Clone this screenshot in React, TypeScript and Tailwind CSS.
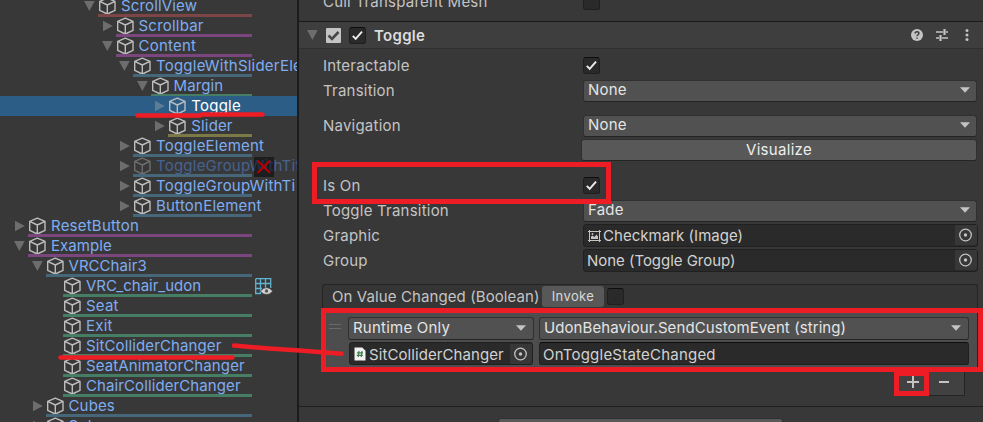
import type { ReactNode } from "react";

type Item = {
  name: string;
  icon: string;
  line: string;
  tracking?: string;
  arrow?: "open" | "closed";
  selected?: boolean;
  dim?: boolean;
  badge?: "cross" | "grid";
};

const items: Item[] = [
  { name: "ScrollView", icon: "pl-[98px]", line: "left-[98px] bg-[#7d4646]", tracking: "tracking-[0.15px]", arrow: "open" },
  { name: "Scrollbar", icon: "pl-[115.5px]", line: "left-[116px] bg-[#7b467d]", arrow: "closed" },
  { name: "Content", icon: "pl-[115.5px]", line: "left-[116px] bg-[#7b467d]", arrow: "open" },
  { name: "ToggleWithSliderEle", icon: "pl-[133px]", line: "left-[133px] bg-[#466779]", arrow: "open" },
  { name: "Margin", icon: "pl-[150.5px]", line: "left-[151px] bg-[#467d65]", tracking: "tracking-[0.1px]", arrow: "open" },
  { name: "Toggle", icon: "pl-[168.3px]", line: "hidden", arrow: "closed", selected: true },
  { name: "Slider", icon: "pl-[168.3px]", line: "left-[168px] bg-[#7b7946]", tracking: "tracking-[0.15px]", arrow: "closed" },
  { name: "ToggleElement", icon: "pl-[133px]", line: "left-[133px] bg-[#466779]", arrow: "closed" },
  { name: "ToggleGroupWithTit", icon: "pl-[133px]", line: "left-[133px] bg-[#466779]", arrow: "closed", dim: true, badge: "cross" },
  { name: "ToggleGroupWithTi", icon: "pl-[133px]", line: "left-[133px] bg-[#466779]", arrow: "closed" },
  { name: "ButtonElement", icon: "pl-[133px]", line: "left-[133px] bg-[#466779]", arrow: "closed" },
  { name: "ResetButton", icon: "pl-[28px]", line: "left-[28px] bg-[#7b467d]", arrow: "closed" },
  { name: "Example", icon: "pl-[28px]", line: "left-[28px] bg-[#7b467d]", tracking: "tracking-[0.05px]", arrow: "open" },
  { name: "VRCChair3", icon: "pl-[45.5px]", line: "left-[46px] bg-[#466779]", tracking: "tracking-[0.05px]", arrow: "open" },
  { name: "VRC_chair_udon", icon: "pl-[63px]", line: "left-[63px] bg-[#467d65]", tracking: "tracking-[0px]", badge: "grid" },
  { name: "Seat", icon: "pl-[63px]", line: "left-[63px] bg-[#467d65]" },
  { name: "Exit", icon: "pl-[63px]", line: "left-[63px] bg-[#467d65]" },
  { name: "SitColliderChanger", icon: "pl-[63px]", line: "left-[63px] bg-[#467d65]", tracking: "tracking-[0.12px]" },
  { name: "SeatAnimatorChanger", icon: "pl-[63px]", line: "left-[63px] bg-[#467d65]", tracking: "tracking-[0.13px]" },
  { name: "ChairColliderChanger", icon: "pl-[63px]", line: "left-[63px] bg-[#467d65]", tracking: "tracking-[0.1px]" },
  { name: "Cubes", icon: "pl-[45.5px]", line: "left-[46px] bg-[#466779]", tracking: "tracking-[0.15px]", arrow: "closed" },
  { name: "Spheres", icon: "pl-[45.5px]", line: "left-[46px] bg-[#466779]", arrow: "closed" },
];

function Cube({ color }: { color: string }) {
  return (
    <svg className="h-[18px] w-[18px] shrink-0" viewBox="0 0 18 18" fill="none" stroke={color} strokeWidth="1.4" strokeLinejoin="round">
      <path d="M9.3 1.1 17 4.4V13.4L9.3 17 1.7 13.4V4.4ZM1.7 4.4 9.3 8 17 4.4M9.3 8V17" />
    </svg>
  );
}

function Arrow({ kind, color = "#6d6d6d" }: { kind: "open" | "closed"; color?: string }) {
  return (
    <svg className="h-[12px] w-[12px] shrink-0" viewBox="0 0 12 12" fill={color}>
      <path d={kind === "open" ? "M0 1H10.7L5.4 11Z" : "M1 .8V11.2L10.8 6Z"} />
    </svg>
  );
}

function HierarchyRow({ item }: { item: Item }) {
  const color = item.selected ? "text-white" : item.dim ? "text-[#48628f]" : "text-[#7fadf1]";
  return (
    <div className={`relative flex h-5 shrink-0 items-center ${item.icon} ${item.selected ? "bg-[#2c5d87]" : ""}`}>
      <div className={`absolute top-[18px] h-[3px] right-[45px] ${item.line}`} />
      <div className="relative -ml-[14px] flex w-[14px] shrink-0">
        {item.arrow && <Arrow kind={item.arrow} color={item.selected ? "#5d7c96" : undefined} />}
      </div>
      <Cube color={item.dim ? "#6e6e6e" : "#bdbdbd"} />
      <span className={`relative ml-[5px] whitespace-nowrap text-[15px] leading-5 ${item.tracking ?? "tracking-[0.22px]"} ${color}`}>{item.name}</span>
      {item.badge === "cross" && (
        <svg className="absolute left-[254px] top-px h-5 w-5" viewBox="0 0 20 20">
          <rect width="20" height="20" fill="#000" fillOpacity=".48" />
          <path d="M3.5 3.5 16 16M16 3.5 3.5 16" stroke="#b30009" strokeWidth="2" />
        </svg>
      )}
      {item.badge === "grid" && (
        <svg className="absolute left-[255px] top-[2px] h-[18px] w-[18px]" viewBox="0 0 18 18" fill="none">
          <path d="M.7 .7H15.7V10M.7 .7V15.5H6M5.5 .7V15.5M10.5 .7V10M.7 5.5H15.7M.7 10.5H7" stroke="#5fb3cf" strokeWidth="1.3" />
          <path d="M5.2 13.2Q11.5 6 17.8 13.2 11.5 20 5.2 13.2Z" fill="#d0d0d0" stroke="#383838" strokeWidth=".6" />
          <circle cx="11.5" cy="13" r="1.7" fill="#555" />
        </svg>
      )}
    </div>
  );
}

function Checkbox({ checked }: { checked?: boolean }) {
  return (
    <span className="flex h-[17px] w-[17px] shrink-0 items-center justify-center rounded-[3px] border border-[#1f1f1f] border-t-[#0d0d0d] bg-[#2a2a2a]">
      {checked && (
        <svg className="h-[13px] w-[13px]" viewBox="0 0 13 13" fill="none" stroke="#ededed" strokeWidth="1.9">
          <path d="M1.8 6.8 4.7 9.9 11 2.6" />
        </svg>
      )}
    </span>
  );
}

function Caret() {
  return (
    <svg className="h-[6px] w-[10px] shrink-0" viewBox="0 0 10 6" fill="#c4c4c4">
      <path d="M0 .2H10L5 5.8Z" />
    </svg>
  );
}

function Dropdown({ className, children }: { className: string; children: ReactNode }) {
  return (
    <div className={`flex items-center justify-between rounded-[3px] border border-[#303030] border-b-[#242424] bg-[#515151] pb-[2px] pl-[4px] text-[#e4e4e4] ${className}`}>
      <span className="whitespace-nowrap">{children}</span>
      <Caret />
    </div>
  );
}

function ObjectField({ className, icon, children }: { className: string; icon?: ReactNode; children: ReactNode }) {
  return (
    <div className={`flex h-[23px] items-center rounded-[3px] border border-[#202020] bg-[#2a2a2a] text-[#d2d2d2] ${className}`}>
      {icon}
      <span className="whitespace-nowrap pt-px">{children}</span>
      <span className="ml-auto flex h-5 w-[22px] shrink-0 items-center justify-center self-start rounded-br-[3px] bg-[#373737]">
        <svg className="h-[14px] w-[14px]" viewBox="0 0 14 14" fill="none">
          <circle cx="6.5" cy="7" r="5.8" stroke="#c4c4c4" strokeWidth="1.3" />
          <circle cx="6.5" cy="7" r="1.7" fill="#c4c4c4" />
        </svg>
      </span>
    </div>
  );
}

function Property({ label, className, children }: { label: string; className?: string; children: ReactNode }) {
  return (
    <div className={`flex h-[25px] shrink-0 items-center pl-[24px] text-[#c4c4c4] ${className ?? ""}`}>
      <span className="w-[260px] shrink-0 whitespace-nowrap pt-px">{label}</span>
      {children}
    </div>
  );
}

const imageIcon = (
  <svg className="mr-[2px] h-[12px] w-[13px] shrink-0" viewBox="0 0 13 12" fill="none" stroke="#c4c4c4">
    <path d="M1.5 0V12M11.5 0V12M0 1.5H13M0 10.5H13" strokeWidth="1" />
    <path d="M3 9V6.5L4.5 5.5 6.5 7 8.5 4.5 10 6.5V9Z" fill="#c4c4c4" stroke="none" />
    <circle cx="4.5" cy="4" r=".9" fill="#c4c4c4" stroke="none" />
  </svg>
);

const scriptIcon = (
  <svg className="mr-[3px] h-[14px] w-[12px] shrink-0" viewBox="0 0 12 14" fill="none">
    <path d="M.5 .5H8.3L11.5 3.7V13.5H.5Z" fill="#f2f2f2" />
    <path d="M5 4 4.2 10M8 4 7.2 10M3 5.8H9M2.8 8.3H8.8" stroke="#3c7d4c" strokeWidth="1.2" />
  </svg>
);

function Inspector() {
  return (
    <main className="flex min-w-0 flex-1 flex-col text-[15px] leading-5 tracking-[0.22px]">
      <div className="flex h-[21px] shrink-0 items-start pl-[24px] text-[#c4c4c4]">
        <span className="-mt-[8px] w-[260px] shrink-0">Cull Transparent Mesh</span>
        <span className="-mt-[7px]"><Checkbox /></span>
      </div>
      <div className="flex h-[28px] shrink-0 items-center border-b border-t border-b-[#303030] border-t-[#1a1a1a] bg-[#3e3e3e] pl-[8px]">
        <Arrow kind="open" />
        <svg className="ml-[7px] h-[15px] w-[15px]" viewBox="0 0 15 15">
          <rect width="15" height="15" rx="1" fill="#c4c4c4" />
          <path d="M2.5 7.5 6 11 12.5 4" fill="none" stroke="#484848" strokeWidth="2.6" />
        </svg>
        <span className="ml-[8px]"><Checkbox checked /></span>
        <span className="ml-[8px] pt-px font-semibold tracking-[0.3px] text-[#dcdcdc]">Toggle</span>
        <svg className="ml-auto h-3 w-3" viewBox="0 0 12 12">
          <circle cx="6" cy="6" r="6" fill="#c4c4c4" />
          <path d="M4.1 4.5Q4.1 2.7 6 2.7T7.9 4.3Q7.9 5.3 6.9 5.8 6 6.3 6 7.3M6 8.4V9.8" fill="none" stroke="#3e3e3e" strokeWidth="1.5" />
        </svg>
        <svg className="ml-[13px] h-3 w-3" viewBox="0 0 12 12" stroke="#c4c4c4" fill="none">
          <path d="M0 3H7M10 3H12M0 9H3M6 9H12" strokeWidth="1.3" />
          <path d="M8.5 0V6M4.5 6V12" strokeWidth="2.2" />
        </svg>
        <svg className="ml-[17px] mr-[14px] h-3 w-[4px]" viewBox="0 0 4 12" fill="#c4c4c4">
          <circle cx="2" cy="1.6" r="1.5" /><circle cx="2" cy="6" r="1.5" /><circle cx="2" cy="10.5" r="1.5" />
        </svg>
      </div>
      <Property label="Interactable" className="mt-[4px]"><Checkbox checked /></Property>
      <Property label="Transition"><Dropdown className="h-[22px] w-[394px] pr-[6px]">None</Dropdown></Property>
      <Property label="Navigation" className="mt-[10px]"><Dropdown className="h-[22px] w-[394px] pr-[6px]">None</Dropdown></Property>
      <div className="ml-[282px] mt-px flex h-[22px] w-[396px] shrink-0 items-center justify-center rounded-[3px] border border-[#303030] border-b-[#242424] bg-[#585858] pb-px tracking-[0.3px] text-[#eeeeee]">
        Visualize
      </div>
      <Property label="Is On" className="mt-[12px]"><Checkbox checked /></Property>
      <Property label="Toggle Transition"><Dropdown className="h-[22px] w-[394px] pr-[6px]">Fade</Dropdown></Property>
      <Property label="Graphic"><ObjectField className="w-[395px] pl-[4px] tracking-[0.03px]" icon={imageIcon}>Checkmark (Image)</ObjectField></Property>
      <Property label="Group"><ObjectField className="w-[395px] pl-[3px] tracking-[-0.03px]">None (Toggle Group)</ObjectField></Property>

      <section className="ml-[23px] mt-[11px] w-[656px] shrink-0">
        <div className="flex h-[24px] items-center rounded-t-[3px] border border-b-0 border-[#242424] bg-[#353535] pl-[9px] text-[#c4c4c4]">
          <span className="w-[210px] whitespace-nowrap tracking-[0.1px]">On Value Changed (Boolean)</span>
          <span className="flex h-[21px] w-[62px] items-center justify-center rounded-[3px] bg-[#585858] pb-px text-[13px] tracking-[0.4px] text-[#d8d8d8]">Invoke</span>
          <span className="ml-[3px]"><Checkbox /></span>
        </div>
        <div className="flex h-[64px] border-x border-[#242424] bg-[#4d4d4d] pl-[6px] pt-[9px]">
          <div className="mt-[7px] h-[5px] w-[12px] border-y border-[#6a6a6a]" />
          <div className="ml-[7px] flex flex-col gap-[2px]">
            <Dropdown className="h-[23px] w-[186px] pr-[7px]">Runtime Only</Dropdown>
            <ObjectField className="ml-px w-[184px] pl-[4px] pt-px tracking-[0.08px]" icon={scriptIcon}>SitColliderChanger</ObjectField>
          </div>
          <div className="ml-[5px] flex flex-col gap-[2px]">
            <Dropdown className="h-[23px] w-[430px] pr-[7px] tracking-[0.08px]">UdonBehaviour.SendCustomEvent (string)</Dropdown>
            <div className="flex h-[23px] w-[430px] items-center rounded-[3px] border border-[#202020] border-t-[#0d0d0d] bg-[#2a2a2a] pl-[3px] pt-[2px] text-[#d2d2d2]">OnToggleStateChanged</div>
          </div>
        </div>
        <div className="ml-[572px] flex h-[24px] w-[71px] items-center rounded-b-[2px] border border-t-0 border-[#242424] bg-[#414141] pb-[3px] pl-[12px]">
          <svg className="h-3 w-3" viewBox="0 0 12 12"><path d="M0 6H12M6 0V12" stroke="#c4c4c4" strokeWidth="2" /></svg>
          <span className="ml-[20px] h-[2px] w-[10px] bg-[#c4c4c4]" />
        </div>
      </section>
      <div className="mt-[10px] h-px shrink-0 bg-[#1f1f1f]" />
      <div className="ml-[199px] mt-[11px] h-[22px] w-[285px] shrink-0 rounded-[3px] border border-[#303030] bg-[#585858]" />
    </main>
  );
}

function Markup() {
  return (
    <svg className="pointer-events-none absolute left-0 top-0 h-[422px] w-[983px]" viewBox="0 0 983 422" fill="none" stroke="#ee1c25">
      <rect x="314.5" y="164.5" width="294" height="37" strokeWidth="5" />
      <rect x="323.5" y="310.5" width="657" height="59" strokeWidth="5" />
      <rect x="896.5" y="373.5" width="30" height="20" strokeWidth="5" />
      <path d="M137.5 115.5H200L202 114.5H262.5" strokeWidth="4.5" strokeLinecap="round" />
      <path d="M60.5 357.5H232.5" strokeWidth="4.5" strokeLinecap="round" />
      <path d="M234 345.5 269 348.5 300 350.5 341.5 353.7" strokeWidth="4.5" strokeLinecap="round" />
    </svg>
  );
}

export default function App() {
  return (
    <div className="relative flex h-[422px] w-[983px] overflow-hidden bg-[#383838] font-['Inter',sans-serif]">
      <aside className="-mt-[4px] flex w-[297px] shrink-0 flex-col overflow-hidden">
        {items.map((item, i) => <HierarchyRow key={i} item={item} />)}
      </aside>
      <div className="w-[2px] shrink-0 bg-[#1c1c1c]" />
      <Inspector />
      <Markup />
    </div>
  );
}
